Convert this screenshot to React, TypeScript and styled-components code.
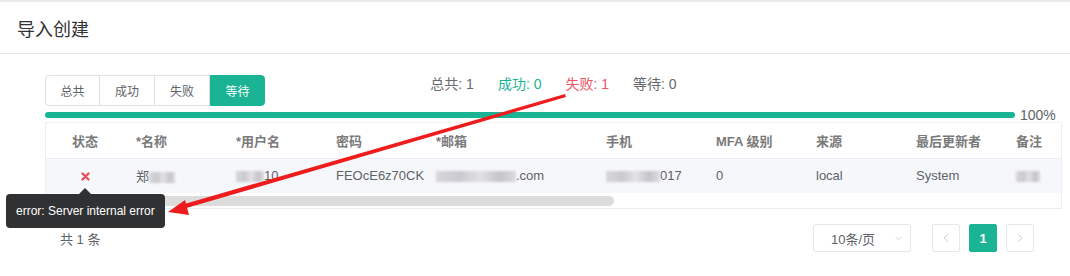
import React from 'react';
import styled, { createGlobalStyle } from 'styled-components';
import { ChevronLeft, ChevronRight, ChevronDown } from 'lucide-react';

const GlobalStyle = createGlobalStyle`
  body {
    margin: 0;
    background: #fff;
    font-family: "Liberation Sans", "Noto Sans CJK SC", sans-serif;
    color: #606266;
  }
`;

const Page = styled.div`
  position: relative;
  width: 1070px;
  height: 276px;
  overflow: hidden;
  border-top: 2px solid #e7eaec;
  box-sizing: border-box;
`;

const Header = styled.div`
  height: 51px;
  display: flex;
  align-items: center;
  padding: 0 17px;
  border-bottom: 1px solid #e7eaec;
  h3 {
    margin: 0;
    font-size: 18px;
    font-weight: normal;
    color: #333;
  }
`;

const Body = styled.div`
  padding: 21px 8px 0 45px;
`;

const Toolbar = styled.div`
  display: grid;
  grid-template-columns: 1fr auto 1fr;
  align-items: start;
  height: 31px;
`;

const Tabs = styled.div`
  display: flex;
`;

const Tab = styled.div<{ $active?: boolean }>`
  width: 55px;
  height: 31px;
  box-sizing: border-box;
  display: flex;
  align-items: center;
  justify-content: center;
  font-size: 12px;
  color: ${p => (p.$active ? '#fff' : '#606266')};
  background: ${p => (p.$active ? '#1ab394' : '#fff')};
  border: 1px solid ${p => (p.$active ? '#1ab394' : '#dcdfe6')};
  border-left-width: ${p => (p.$active ? '1px' : '0')};
  &:first-child {
    border-left-width: 1px;
    border-radius: 4px 0 0 4px;
  }
  &:last-child {
    border-radius: 0 4px 4px 0;
  }
`;

const Stats = styled.div`
  display: flex;
  gap: 24px;
  font-size: 14px;
  line-height: 18px;
`;

const Stat = styled.span<{ $color: string }>`
  color: ${p => p.$color};
`;

const ProgressRow = styled.div`
  display: flex;
  align-items: center;
  margin-top: 3px;
  height: 12px;
`;

const Track = styled.div`
  flex: 1;
  height: 6px;
  border-radius: 3px;
  background: #1ab394;
`;

const Percent = styled.span`
  width: 42px;
  padding-left: 5px;
  font-size: 14px;
  color: #606266;
`;

const TableWrap = styled.div`
  position: relative;
  margin-top: 1px;
  border: 1px solid #ebeef5;
  border-top-color: #f2f2f2;
`;

const Scroller = styled.div`
  overflow: hidden;
`;

const Table = styled.table`
  border-collapse: collapse;
  table-layout: fixed;
  width: 1140px;
  font-size: 13px;
`;

const Th = styled.th<{ $w: number; $center?: boolean }>`
  width: ${p => p.$w}px;
  height: 35px;
  padding: 0 12px;
  text-align: ${p => (p.$center ? 'center' : 'left')};
  font-weight: bold;
  color: #7a7a7a;
  border-bottom: 1px solid #ebeef5;
  white-space: nowrap;
  box-sizing: border-box;
`;

const Tr = styled.tr`
  background: #f5f7fa;
`;

const Td = styled.td<{ $center?: boolean }>`
  height: 35px;
  padding: 0 12px;
  text-align: ${p => (p.$center ? 'center' : 'left')};
  color: #606266;
  white-space: nowrap;
  overflow: hidden;
  text-overflow: clip;
  box-sizing: border-box;
  &.clip {
    padding-right: 0;
  }
`;

const Blur = styled.span<{ $w: number }>`
  display: inline-block;
  vertical-align: middle;
  width: ${p => p.$w}px;
  height: 11px;
  background: linear-gradient(90deg, #d8d8dc, #c9c9cf 30%, #e2e2e6 55%, #c4c4ca 80%, #dcdce0);
  filter: blur(1px);
`;

const ScrollTrack = styled.div`
  height: 15px;
  display: flex;
  align-items: center;
`;

const Thumb = styled.div`
  width: 568px;
  height: 10px;
  border-radius: 5px;
  background: #dcdcdc;
`;

const Tooltip = styled.div`
  position: absolute;
  left: -40px;
  top: 71px;
  padding: 0 10px;
  height: 34px;
  display: flex;
  align-items: center;
  background: #303133;
  color: #fff;
  font-size: 12px;
  border-radius: 4px;
  white-space: nowrap;
  &::before {
    content: '';
    position: absolute;
    left: 73px;
    top: -6px;
    border: 6px solid transparent;
    border-top: 0;
    border-bottom-color: #303133;
  }
`;

const Footer = styled.div`
  display: flex;
  align-items: center;
  justify-content: space-between;
  margin-top: 15px;
  padding: 0 28px 0 15px;
  height: 28px;
`;

const Total = styled.span`
  font-size: 13px;
  color: #606266;
`;

const Pager = styled.div`
  display: flex;
  align-items: center;
  gap: 9px;
`;

const Select = styled.div`
  width: 98px;
  height: 28px;
  box-sizing: border-box;
  border: 1px solid #e4e7ed;
  border-radius: 3px;
  display: flex;
  align-items: center;
  justify-content: space-between;
  padding: 0 6px 0 17px;
  margin-right: 12px;
  font-size: 13px;
  color: #606266;
`;

const PageBtn = styled.div<{ $active?: boolean }>`
  width: 28px;
  height: 28px;
  box-sizing: border-box;
  display: flex;
  align-items: center;
  justify-content: center;
  border: 1px solid ${p => (p.$active ? '#1ab394' : '#e4e7ed')};
  background: ${p => (p.$active ? '#1ab394' : '#fff')};
  color: ${p => (p.$active ? '#fff' : '#c0c4cc')};
  font-size: 13px;
  font-weight: bold;
  border-radius: 2px;
`;

const Annotation = styled.svg`
  position: absolute;
  left: 0;
  top: 0;
  pointer-events: none;
`;

const columns = [
  { t: '状态', w: 78, c: true },
  { t: '*名称', w: 100 },
  { t: '*用户名', w: 100 },
  { t: '密码', w: 100 },
  { t: '*邮箱', w: 170 },
  { t: '手机', w: 110 },
  { t: 'MFA 级别', w: 100 },
  { t: '来源', w: 100 },
  { t: '最后更新者', w: 100 },
  { t: '备注', w: 182 },
];

const FailIcon = () => (
  <svg width="9" height="9" viewBox="0 0 9 9" style={{ verticalAlign: 'middle' }}>
    <path d="M1.5 1.5 L7.5 7.5 M7.5 1.5 L1.5 7.5" stroke="#e8505b" strokeWidth="2.4" strokeLinecap="round" />
  </svg>
);

export default function App() {
  return (
    <Page>
      <GlobalStyle />
      <Header>
        <h3>导入创建</h3>
      </Header>
      <Body>
        <Toolbar>
          <Tabs>
            <Tab>总共</Tab>
            <Tab>成功</Tab>
            <Tab>失败</Tab>
            <Tab $active>等待</Tab>
          </Tabs>
          <Stats>
            <Stat $color="#676a6c">总共: 1</Stat>
            <Stat $color="#1ab394">成功: 0</Stat>
            <Stat $color="#ed5565">失败: 1</Stat>
            <Stat $color="#676a6c">等待: 0</Stat>
          </Stats>
          <div />
        </Toolbar>
        <ProgressRow>
          <Track />
          <Percent>100%</Percent>
        </ProgressRow>
        <TableWrap>
          <Scroller>
            <Table>
              <thead>
                <tr>
                  {columns.map(c => (
                    <Th key={c.t} $w={c.w} $center={c.c}>{c.t}</Th>
                  ))}
                </tr>
              </thead>
              <tbody>
                <Tr>
                  <Td $center><FailIcon /></Td>
                  <Td>郑<Blur $w={26} /></Td>
                  <Td><Blur $w={28} />10</Td>
                  <Td className="clip">FEOcE6z70CKtY1</Td>
                  <Td><Blur $w={80} />.com</Td>
                  <Td><Blur $w={54} />017</Td>
                  <Td>0</Td>
                  <Td>local</Td>
                  <Td>System</Td>
                  <Td><Blur $w={24} /></Td>
                </Tr>
              </tbody>
            </Table>
          </Scroller>
          <ScrollTrack>
            <Thumb />
          </ScrollTrack>
          <Tooltip>error: Server internal error</Tooltip>
        </TableWrap>
        <Footer>
          <Total>共 1 条</Total>
          <Pager>
            <Select>
              10条/页
              <ChevronDown size={11} color="#d0d3d9" />
            </Select>
            <PageBtn><ChevronLeft size={14} strokeWidth={1.5} /></PageBtn>
            <PageBtn $active>1</PageBtn>
            <PageBtn><ChevronRight size={14} strokeWidth={1.5} /></PageBtn>
          </Pager>
        </Footer>
      </Body>
      <Annotation width="1070" height="276" viewBox="0 0 1070 276">
        <polygon points="565,92 566,95 183,207 181,203" fill="#ee1c1c" />
        <polygon points="168,210 185,198 189,213" fill="#ee1c1c" />
      </Annotation>
    </Page>
  );
}
